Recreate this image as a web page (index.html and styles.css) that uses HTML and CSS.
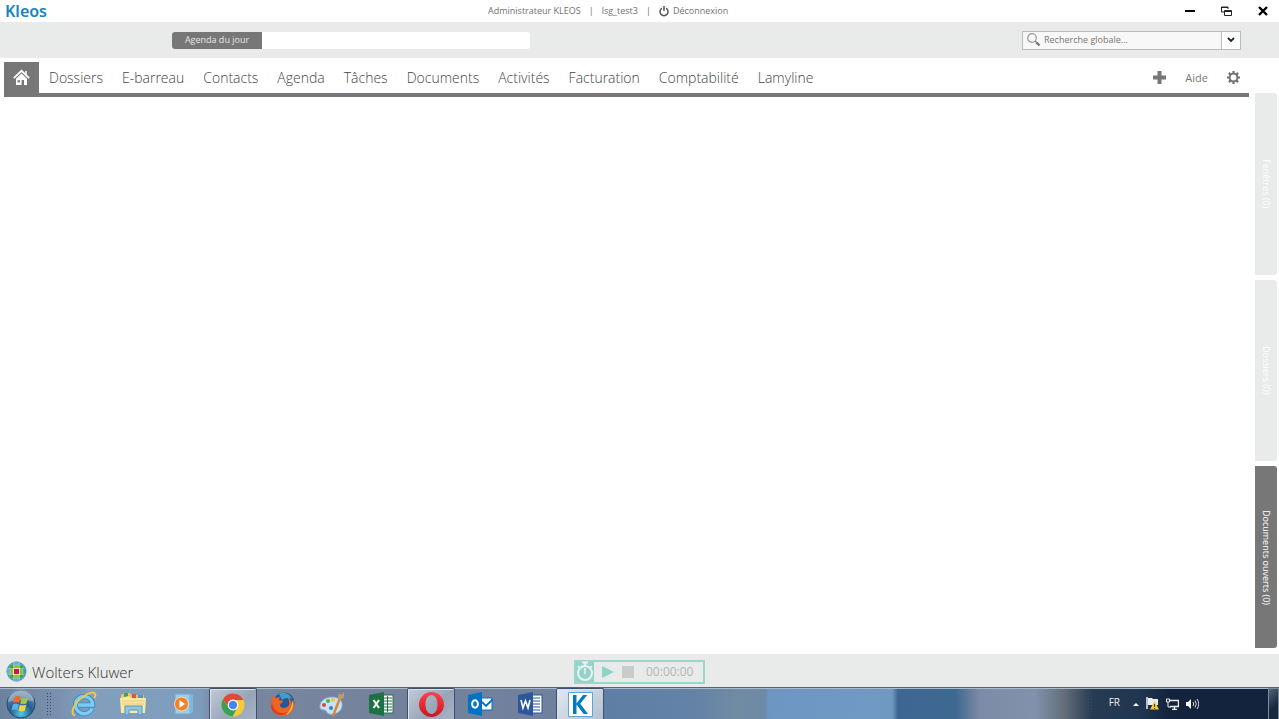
FILE: index.html
```html
<!DOCTYPE html>
<html lang="fr">
<head>
<meta charset="utf-8">
<title>Kleos</title>
<link rel="stylesheet" href="styles.css">
</head>
<body>
<header class="titlebar">
  <div class="brand">Kleos</div>
  <div class="session">
    <span>Administrateur KLEOS</span><span>|</span><span>lsg_test3</span><span>|</span>
    <a class="logout" href="#"><svg width="10" height="11" viewBox="0 0 10 11" fill="none" stroke="#555" stroke-width="1.5"><path d="M3 2.2A4 4 0 1 0 7 2.2M5 0v5"/></svg>Déconnexion</a>
  </div>
  <div class="window-controls">
    <button aria-label="Réduire"><svg width="10" height="10"><path d="M0 5h10" stroke="#000" stroke-width="2"/></svg></button>
    <button aria-label="Restaurer"><svg width="11" height="10" fill="none" stroke="#222"><path d="M3 6H.5V1H7v2M.5 1.500H7M3.500 4.500h7v5h-7zM3.500 5.500h7"/></svg></button>
    <button aria-label="Fermer"><svg width="10" height="10"><path d="M1 1l8 8M9 1L1 9" stroke="#000" stroke-width="2.4"/></svg></button>
  </div>
</header>
<div class="toolbar">
  <div class="day"><button class="day-button">Agenda du jour</button><input class="day-field" aria-label="Agenda du jour"></div>
  <form class="search">
    <svg class="lens" width="14" height="14" viewBox="0 0 14 14" fill="none"><circle cx="5" cy="5" r="4.3" stroke="#999" stroke-width="1.2"/><path d="M8 8l2 2" stroke="#888" stroke-width="1.3"/><path d="M9.500 9.500l3 3" stroke="#777" stroke-width="2.4"/></svg>
    <input class="search-field" aria-label="Recherche globale" placeholder="Recherche globale...">
    <button class="search-more" type="button" aria-label="Options de recherche"><svg width="8" height="6" fill="none"><path d="M1 1l3 3 3-3" stroke="#222" stroke-width="1.8"/></svg></button>
  </form>
</div>
<div class="workspace">
  <div class="content">
    <nav class="nav">
      <a class="home" href="#" aria-label="Accueil"><svg width="17" height="17" viewBox="0 0 17 17" fill="none" stroke="#fff"><path d="M.8 9.200L8.500 1.800 16.200 9.200" stroke-width="1.800"/><path d="M3 9.800L8.500 4.600 14 9.800V16h-3v-5H8.600v5H3z" fill="#fff" stroke="none"/><path d="M4.600 11.200h2.400v2.200H4.600z" fill="#777" stroke="none"/><path d="M13 2v3.500" stroke-width="1.500"/></svg></a>
      <a href="#">Dossiers</a><a href="#">E-barreau</a><a href="#">Contacts</a><a href="#">Agenda</a><a href="#">Tâches</a><a href="#">Documents</a><a href="#">Activités</a><a href="#">Facturation</a><a href="#">Comptabilité</a><a href="#">Lamyline</a>
      <div class="tools">
        <button aria-label="Ajouter"><svg width="13" height="13"><path d="M6.500 0v13M0 6.500h13" stroke="#777" stroke-width="4"/></svg></button>
        <a class="help" href="#">Aide</a>
        <button aria-label="Paramètres"><svg width="13" height="13" viewBox="0 0 13 13" fill="none" stroke="#707070"><circle cx="6.500" cy="6.500" r="3.900" stroke-width="1.900"/><path d="M6.500 0v2M6.500 11v2M0 6.500h2M11 6.500h2M1.900 1.900l1.500 1.500M9.600 9.600l1.500 1.500M11.100 1.900L9.600 3.400M3.400 9.600l-1.500 1.500" stroke-width="2.200"/></svg></button>
      </div>
    </nav>
    <main class="main"></main>
  </div>
  <aside class="side">
    <button class="side-tab">Fenêtres (0)</button>
    <button class="side-tab">Dossiers (0)</button>
    <button class="side-tab side-active">Documents ouverts (0)</button>
  </aside>
</div>
<footer class="footer">
  <div class="company">
    <svg width="21" height="21" viewBox="0 0 21 21"><defs><clipPath id="globe"><circle cx="10.500" cy="10.500" r="10"/></clipPath></defs><g clip-path="url(#globe)"><path fill="#4596c4" d="M0 0h21v21H0z"/><path fill="#86c440" d="M4 4h13v13H4z"/><path fill="#69b1d6" d="M7 0h7v4H7zM7 17h7v4H7zM0 7h4v7H0z"/><path fill="#3f9d46" d="M4 4h3v3H4zM14 4h3v3h-3zM4 14h3v3H4zM14 14h3v3h-3z"/><path fill="#ddecb6" d="M7 7h7v7H7z"/><path fill="#d3135b" d="M8 8h5v5H8z"/><path d="M4 0v21M7.500 0v21M13.500 0v21M17 0v21M0 4h21M0 7.500h21M0 13.500h21M0 17h21" stroke="#d7ebcd" stroke-width=".5" opacity=".5"/></g></svg>
    <span>Wolters Kluwer</span>
  </div>
  <div class="timer">
    <button class="watch" aria-label="Chronomètre"><svg width="18" height="21" viewBox="0 0 18 21" fill="none" stroke="#eef3f1"><circle cx="9" cy="12" r="7" stroke-width="2"/><path d="M9 7v6" stroke-width="1.600"/><path d="M6 1.500h6M9 1v4" stroke-width="2"/><path d="M2 5l2 2M16 5l-2 2" stroke-width="1.600"/></svg></button>
    <button aria-label="Démarrer"><svg width="12" height="12"><path d="M0 0l12 6-12 6z" fill="#8fd3c8"/></svg></button>
    <button aria-label="Arrêter"><svg width="12" height="12"><path d="M0 0h12v12H0z" fill="#cacbca"/></svg></button>
    <span class="time">00:00:00</span>
  </div>
</footer>
<div class="taskbar">
  <button class="start" aria-label="Démarrer"><svg width="30" height="30" viewBox="0 0 30 30"><defs><radialGradient id="orb" cx=".5" cy=".85" r=".8"><stop stop-color="#4fc9ea"/><stop offset=".5" stop-color="#245c8c"/><stop offset="1" stop-color="#7695b5"/></radialGradient></defs><circle cx="15" cy="15" r="14" fill="url(#orb)" stroke="#24486c"/><path d="M2 13a13 13 0 0 1 26 0c-8-3-17-2-26 0z" fill="#fff" opacity=".3"/><path d="M8.500 8c2-1.200 4-1.200 6 0l-1.400 6c-2-1-4-1-6 .2z" fill="#f0682b"/><path d="M15.600 8.600c2 1 4 1 6.400 0l-1.500 6c-2 1-4.200 1-6.300 0z" fill="#9bc83d"/><path d="M6.800 15.400c2-1.200 4-1.200 6-.2l-1.400 6c-2-1-4-1-6 .3z" fill="#5bb0ea"/><path d="M13.900 15.800c2 1 4.200 1 6.300 0l-1.500 6c-2 1-4.200 1-6.200 0z" fill="#ffd13c"/></svg></button>
  <div class="grip"></div>
  <div class="apps">
    <button aria-label="Internet Explorer"><svg width="27" height="27" viewBox="0 0 27 27" fill="none"><path d="M22 17.500a8.600 8.600 0 1 1 .700-3.500H8" stroke="#2f86c8" stroke-width="5"/><path d="M22 17.500a8.600 8.600 0 1 1 .700-3.500H8" stroke="#7ccdf4" stroke-width="3.400"/><path d="M5 24.500C-1 23 5 11 13 6c5-4 11-6 12-3 .5 1 0 3-1 4" stroke="#f4c744" stroke-width="2"/></svg></button>
    <button aria-label="Explorateur"><svg width="26" height="24" viewBox="0 0 26 24"><path d="M1 3l3-2h6l2 2h12v17H1z" fill="#e9c364"/><path d="M4 1h4v4H4z" fill="#46a34a"/><path d="M12 2h4v4h-4z" fill="#d65b43"/><path d="M18 3h5v4h-5z" fill="#5593c9"/><path d="M0 6l9-2 2 2h15l-1 15H1z" fill="#f9e6a0"/><path d="M2 9h22M2 12h22" stroke="#eecd71"/><path d="M5 14h17v9h-4v-5H9v5H5z" fill="#8fc7e7" stroke="#5795c2"/></svg></button>
    <button aria-label="Lecteur multimédia"><svg width="21" height="22" viewBox="0 0 21 22"><path d="M2 1h15v20H2z" fill="#9fcde6" stroke="#6aaad0"/><path d="M17 1l3 1v17l-3 2z" fill="#7cb9dc"/><circle cx="8.500" cy="11" r="7" fill="#f18228" stroke="#f6d9bd"/><path d="M6.500 7l5.500 4-5.500 4z" fill="#fff"/></svg></button>
    <button class="open" aria-label="Chrome"><svg width="24" height="24" viewBox="0 0 24 24"><circle cx="12" cy="12" r="11.500" fill="#f6cb35"/><path d="M2 6.200A11.500 11.500 0 0 1 22.400 7H12a5 5 0 0 0-4.500 7.200z" fill="#de4a3d"/><path d="M2 6.200A11.500 11.500 0 0 0 11.500 23.500l5-9A5 5 0 0 1 7.500 14.300z" fill="#37a156"/><circle cx="12" cy="12" r="5.400" fill="#fff"/><circle cx="12" cy="12" r="4.200" fill="#4386ef"/></svg></button>
    <button aria-label="Firefox"><svg width="25" height="25" viewBox="0 0 25 25"><circle cx="14" cy="11" r="10.500" fill="#22599c"/><path d="M9 2c5-3 11 0 13 5-4-2-8-1-10 1z" fill="#409dcc"/><path d="M3 3l2 3 5-1-1 3 4 1c0 2-3 2-3 4 0 4 7 4 9 0 1-4-1-7-2-8 5 2 5 8 3 11 3-2 4-6 3-9 4 7-1 17-10 17C4 24 0 17 1 10z" fill="#ed6423"/><path d="M2 10c1 10 9 13 16 10-5 5-15 4-17-5z" fill="#d83e20"/><path d="M22 8c3 6-1 13-6 15 4-4 6-9 6-15z" fill="#fac33b"/></svg></button>
    <button aria-label="Paint"><svg width="27" height="25" viewBox="0 0 27 25"><path d="M14 5C5 5 1 11 2 16c1 3 4 1 6 3 1 3 4 4 8 3 6-1 9-6 8-11-1-4-5-6-10-6z" fill="#c8e2f3" stroke="#77acd3"/><circle cx="6" cy="13" r="2" fill="#d94b37"/><circle cx="10" cy="9" r="2" fill="#56ac4a"/><circle cx="15" cy="8" r="2" fill="#f0c14b"/><circle cx="13" cy="16" r="2" fill="#3b80c8"/><path d="M15 24l7-18" stroke="#d98a38" stroke-width="2.500"/><path d="M20 5l1-4 2 2 3-3v5l-4 3z" fill="#c69b63"/></svg></button>
    <button aria-label="Excel"><svg width="25" height="24" viewBox="0 0 25 24"><path d="M13 3h11v18H13z" fill="#fff" stroke="#217346"/><path d="M14 6h9M14 9h9M14 12h9M14 15h9M14 18h9M18.500 4v16" stroke="#217346"/><path d="M0 3l15-3v24L0 21z" fill="#1e7145"/><path d="M4.500 8l5.500 8M10 8l-5.500 8" stroke="#fff" stroke-width="2"/></svg></button>
    <button class="open" aria-label="Opera"><svg width="25" height="25" viewBox="0 0 25 25"><defs><linearGradient id="opera" x2="0" y2="1"><stop stop-color="#ff4148"/><stop offset="1" stop-color="#c71720"/></linearGradient></defs><path fill="url(#opera)" fill-rule="evenodd" d="M12.500 0a12.500 12.500 0 1 0 0 25 12.500 12.500 0 0 0 0-25zm0 3c3.500 0 6 4 6 9.500s-2.500 9.500-6 9.500-6-4-6-9.500 2.500-9.500 6-9.500z"/></svg></button>
    <button aria-label="Outlook"><svg width="25" height="24" viewBox="0 0 25 24"><path d="M13 6h11v12H13z" fill="#fff" stroke="#0072c6"/><path d="M14 10l4 4 7-7" fill="none" stroke="#0072c6" stroke-width="1.800"/><path d="M0 3l14-3v24L0 21z" fill="#0072c6"/><ellipse cx="7" cy="12" rx="2.900" ry="3.700" fill="none" stroke="#fff" stroke-width="2"/></svg></button>
    <button aria-label="Word"><svg width="25" height="24" viewBox="0 0 25 24"><path d="M13 3h11v18H13z" fill="#fff" stroke="#2b579a"/><path d="M15 6h7M15 9h7M15 12h7M15 15h7M15 18h7" stroke="#2b579a"/><path d="M0 3l15-3v24L0 21z" fill="#2b579a"/><path d="M3 8l2 8 2.500-7L10 16l2-8" fill="none" stroke="#fff" stroke-width="1.600"/></svg></button>
    <button class="open current" aria-label="Kleos"><svg width="25" height="25" viewBox="0 0 25 25"><path d="M.5.5h24v24H.5z" fill="#fff" stroke="#54a9d9"/><path d="M5 3h3.500v8.500L15 3h4.200l-7 8.700L20 22h-4.300l-7.200-9.500V22H5z" fill="#007ac3"/></svg></button>
  </div>
  <div class="tray">
    <div class="grip tray-grip"></div>
    <span class="lang">FR</span>
    <button aria-label="Icônes cachées"><svg width="6" height="4"><path d="M0 4l3-3 3 3z" fill="#fff"/></svg></button>
    <button aria-label="Centre de maintenance"><svg width="13" height="13" viewBox="0 0 13 13"><path d="M1 0v12" stroke="#eee" stroke-width="1.500"/><path d="M2 1h4l1 1h5v6H2z" fill="#e9edf2"/><path d="M8.500 4l4.500 8.500H4z" fill="#f6c928"/><path d="M8.500 7v3M8.500 11v1" stroke="#4b3a00"/></svg></button>
    <button aria-label="Réseau"><svg width="13" height="12" viewBox="0 0 13 12" fill="none" stroke="#eee"><path d="M4 2.500h8.500v6H4M6 11.500h5M8.500 9v2" stroke-width="1.400"/><path d="M.5 1h3v3h-3zM2 4v5h3"/></svg></button>
    <button aria-label="Volume"><svg width="13" height="12" viewBox="0 0 13 12" fill="none" stroke="#ddd"><path d="M0 4h2l3-3v10L2 8H0z" fill="#fff" stroke="none"/><path d="M7 4q1.500 2 0 4M9 2.500q2.500 3.500 0 7M11 1q3.500 5 0 10"/></svg></button>
    <button class="desktop" aria-label="Afficher le bureau"></button>
  </div>
</div>
</body>
</html>
```
FILE: styles.css
```css
* { box-sizing: border-box; }
body {
  margin: 0;
  height: 100vh;
  display: flex;
  flex-direction: column;
  background: #fff;
  color: #707070;
  font: 9px/14px "Open Sans", "Noto Sans", sans-serif;
}
button, input { margin: 0; padding: 0; border: 0; background: none; color: inherit; font: inherit; }
button { display: flex; align-items: center; justify-content: center; }
a { color: inherit; text-decoration: none; }
svg { display: block; flex: none; }

.titlebar { display: flex; align-items: center; height: 22px; flex: none; }
.brand { width: 488px; padding-left: 5px; color: #1583c6; font: 600 16px/22px "Noto Sans", sans-serif; }
.session { display: flex; gap: 8px; }
.logout { display: flex; align-items: center; gap: 4px; }
.window-controls { display: flex; gap: 26px; margin-left: auto; padding-right: 11px; }

.toolbar { display: flex; align-items: center; justify-content: space-between; flex: none; height: 36px; padding: 0 38px 0 172px; background: #e9ebea; }
.day { display: flex; width: 358px; height: 17px; border-radius: 3px; overflow: hidden; background: #fff; }
.day-button { width: 90px; background: #777; color: #e6e6e6; }
.day-field { flex: 1; min-width: 0; }
.search { display: flex; align-items: center; width: 219px; height: 19px; border: 1px solid #bbb; background: #f8f8f8; }
.lens { margin-left: 4px; }
.search-field { flex: 1; min-width: 0; padding-left: 3px; }
.search-field::placeholder { color: #777; opacity: 1; }
.search-more { width: 19px; height: 17px; border-left: 1px solid #bbb; background: #fff; }

.workspace { display: flex; flex: 1; min-height: 0; padding: 4px 2px 6px 4px; gap: 6px; }
.content { display: flex; flex-direction: column; flex: 1; min-width: 0; }
.nav { display: flex; align-items: center; gap: 19px; height: 35px; border-bottom: 4px solid #777; font-size: 14px; font-weight: 300; line-height: 20px; color: #444; white-space: nowrap; }
.home { display: flex; align-items: center; justify-content: center; align-self: stretch; width: 35px; margin-right: -9px; background: #777; }
.tools { display: flex; align-items: center; gap: 19px; margin-left: auto; padding-right: 9px; }
.help { font-size: 11px; font-weight: 400; color: #777; }
.main { flex: 1; }
.side { display: flex; flex-direction: column; gap: 5px; width: 22px; padding-top: 31px; }
.side-tab { flex: 1; writing-mode: vertical-rl; border-radius: 0 3px 3px 0; background: #e9ebea; color: #fff; }
.side-active { background: #777; }

.footer { display: flex; align-items: center; flex: none; height: 33px; padding-left: 6px; background: #e9ebea; }
.company { display: flex; align-items: center; gap: 5px; width: 568px; padding-top: 2px; font: 300 15px/22px "Open Sans", sans-serif; color: #333; }
.timer { display: flex; align-items: center; gap: 8px; width: 131px; height: 24px; margin-top: 2px; border: 2px solid #9ad6cc; color: #b4b4b4; }
.watch { width: 18px; height: 20px; background: #93d3c9; }
.time { flex: 1; padding-left: 4px; font-size: 12px; }

.taskbar {
  display: flex;
  flex: none;
  height: 32px;
  border-top: 1px solid #59646e;
  box-shadow: inset 0 1px #a9bacb;
  background: linear-gradient(90deg, #6c819d 0, #7890ae 55px, #829fbd 90px, #7e9cbe 200px, #79879f 215px, #73819b 400px, #71819d 550px, #5e7ea4 610px, #6282a6 690px, #718ba3 740px, #6d8aa7 765px, #6e96c3 769px, #7099c2 892px, #3d6792 898px, #3d6890 955px, #7c8ba6 980px, #8292ac 1035px, #626d78 1065px, #263c52 1092px, #203650 1140px, #13233e 1170px, #13233e 100%);
}
.start { width: 42px; }
.grip { width: 7px; height: 24px; margin: 4px 6px 0 4px; background: radial-gradient(circle, #364b65 1px, transparent 1px) 0 0 / 3px 3px; }
.apps { display: grid; grid-template-columns: repeat(11, 1fr); width: 546px; }
.apps button { margin: 0 1px; padding-top: 1px; }
.apps .open { border: 1px solid #40506a; border-bottom: 0; border-radius: 2px 2px 0 0; background: linear-gradient(135deg, #c1cbd8, #97a5b9 60%, #a9b4c6); box-shadow: inset 1px 1px #dae1ea; }
.apps .current { background: linear-gradient(135deg, #e1e8ef, #b6c2d1); }
.tray { display: flex; align-items: center; margin-left: auto; gap: 7px; color: #eee; }
.tray-grip { margin: 0 8px 0 0; }
.lang { padding: 0 6px 4px 0; font-size: 10px; }
.desktop { align-self: stretch; width: 11px; margin-left: 62px; border: 1px solid #7e8b9c; border-bottom: 0; background: linear-gradient(135deg, #53647a, #17273d 60%); }
```
